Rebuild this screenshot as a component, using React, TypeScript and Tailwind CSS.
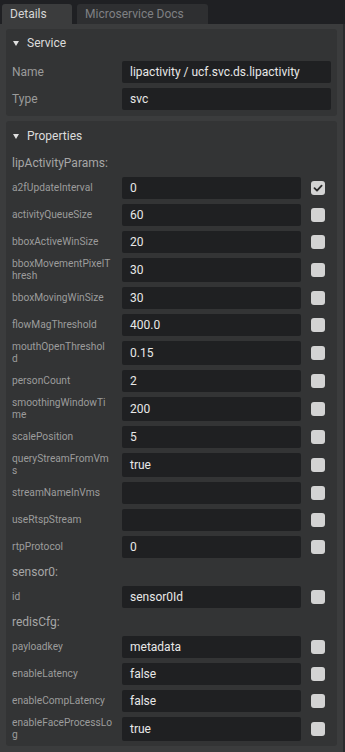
import React from "react";

type Row = { label: string; rest?: string; value: string; checked?: boolean } | { group: string };

const rows: Row[] = [
  { group: "lipActivityParams:" },
  { label: "a2fUpdateInterval", value: "0", checked: true },
  { label: "activityQueueSize", value: "60" },
  { label: "bboxActiveWinSize", value: "20" },
  { label: "bboxMovementPixelT", rest: "hresh", value: "30" },
  { label: "bboxMovingWinSize", value: "30" },
  { label: "flowMagThreshold", value: "400.0" },
  { label: "mouthOpenThreshol", rest: "d", value: "0.15" },
  { label: "personCount", value: "2" },
  { label: "smoothingWindowTi", rest: "me", value: "200" },
  { label: "scalePosition", value: "5" },
  { label: "queryStreamFromVm", rest: "s", value: "true" },
  { label: "streamNameInVms", value: "" },
  { label: "useRtspStream", value: "" },
  { label: "rtpProtocol", value: "0" },
  { group: "sensor0:" },
  { label: "id", value: "sensor0Id" },
  { group: "redisCfg:" },
  { label: "payloadkey", value: "metadata" },
  { label: "enableLatency", value: "false" },
  { label: "enableCompLatency", value: "false" },
  { label: "enableFaceProcessLo", rest: "g", value: "true" },
];

function Tri() {
  return (
    <svg width="6" height="5" viewBox="0 0 6 5" className="shrink-0">
      <path d="M0 0 H6 L3 5 Z" fill="#e0e0e0" />
    </svg>
  );
}

function Check({ checked }: { checked?: boolean }) {
  return (
    <div className="ml-[10px] mr-[6px] w-[14px] h-[14px] rounded-[3px] bg-[#d3d3d3] flex items-center justify-center shrink-0">
      {checked && (
        <svg width="10" height="10" viewBox="0 0 10 10">
          <path d="M1.5 5.2 L4 7.6 L8.6 2.6" stroke="#2a2a2a" strokeWidth="1.8" fill="none" strokeLinecap="round" strokeLinejoin="round" />
        </svg>
      )}
    </div>
  );
}

export default function App() {
  return (
    <div className="w-[345px] h-[752px] bg-[#1f2023] flex flex-col overflow-hidden" style={{ fontFamily: "Roboto, 'Noto Sans', sans-serif" }}>
      <div className="h-[4px] shrink-0" />
      <div className="h-[20px] flex items-stretch pl-[2px] gap-[5px] shrink-0">
        <div className="w-[70px] bg-[#3b3c3d] rounded-t-[3px] text-[12px] text-[#d6d6d6] pl-[8px] flex items-center">Details</div>
        <div className="w-[131px] bg-[#2e2f31] rounded-t-[3px] text-[12px] text-[#7f8083] pl-[8px] flex items-center">Microservice Docs</div>
      </div>
      <div className="flex-1 bg-[#3b3c3d] pl-[6px] pr-[6px] pt-[5px] flex flex-col gap-[5px] border-r-[2px] border-[#2a2b2d]">
        <div className="bg-[#333435] rounded-[3px] px-[6px] pb-[6px] flex flex-col">
          <div className="h-[28px] flex items-center gap-[8px] pl-[1px] text-[12px] text-[#dcdcdc]">
            <Tri />
            <span>Service</span>
          </div>
          <div className="mt-[4px] flex flex-col gap-[5px]">
            {[
              ["Name", "lipactivity / ucf.svc.ds.lipactivity"],
              ["Type", "svc"],
            ].map(([l, v]) => (
              <div key={l} className="flex h-[22px]">
                <div className="w-[104px] mr-[6px] flex items-center text-[12px] text-[#9b9b9b]">{l}</div>
                <div className="flex-1 bg-[#1f2022] rounded-[2px] pl-[8px] flex items-center text-[12px] text-[#e8e8e8]">{v}</div>
              </div>
            ))}
          </div>
        </div>
        <div className="bg-[#333435] rounded-[3px] px-[6px] pb-[5px] flex flex-col">
          <div className="h-[29px] flex items-center gap-[8px] pl-[1px] pt-[1px] text-[12px] text-[#dcdcdc]">
            <Tri />
            <span>Properties</span>
          </div>
          <div className="mt-[4px] flex flex-col gap-[5px]">
            {rows.map((r, i) =>
              "group" in r ? (
                <div key={i} className="h-[18px] flex items-center text-[12px] text-[#a6a6a6]">{r.group}</div>
              ) : (
                <div key={i} className="flex min-h-[22px] items-stretch">
                  <div className="w-[104px] mr-[6px] flex items-center text-[10.2px] leading-[12px] text-[#9c9c9c] whitespace-nowrap">
                    <span>
                      {r.label}
                      {r.rest && (
                        <>
                          <br />
                          {r.rest}
                        </>
                      )}
                    </span>
                  </div>
                  <div className="flex-1 bg-[#1f2022] rounded-[2px] pl-[8px] flex items-center text-[12px] text-[#e8e8e8]">{r.value}</div>
                  <div className="flex items-center">
                    <Check checked={r.checked} />
                  </div>
                </div>
              )
            )}
          </div>
        </div>
      </div>
    </div>
  );
}
